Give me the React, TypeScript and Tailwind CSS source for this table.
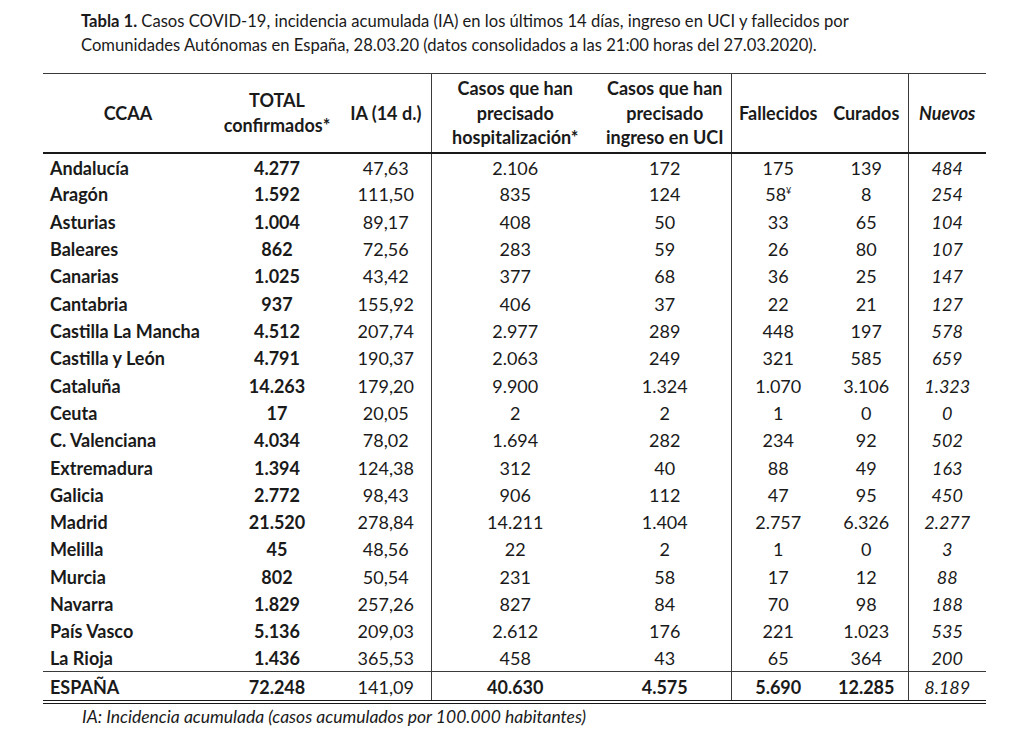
import React from "react";

const rows: string[][] = [
  ["Andalucía", "4.277", "47,63", "2.106", "172", "175", "139", "484"],
  ["Aragón", "1.592", "111,50", "835", "124", "58¥", "8", "254"],
  ["Asturias", "1.004", "89,17", "408", "50", "33", "65", "104"],
  ["Baleares", "862", "72,56", "283", "59", "26", "80", "107"],
  ["Canarias", "1.025", "43,42", "377", "68", "36", "25", "147"],
  ["Cantabria", "937", "155,92", "406", "37", "22", "21", "127"],
  ["Castilla La Mancha", "4.512", "207,74", "2.977", "289", "448", "197", "578"],
  ["Castilla y León", "4.791", "190,37", "2.063", "249", "321", "585", "659"],
  ["Cataluña", "14.263", "179,20", "9.900", "1.324", "1.070", "3.106", "1.323"],
  ["Ceuta", "17", "20,05", "2", "2", "1", "0", "0"],
  ["C. Valenciana", "4.034", "78,02", "1.694", "282", "234", "92", "502"],
  ["Extremadura", "1.394", "124,38", "312", "40", "88", "49", "163"],
  ["Galicia", "2.772", "98,43", "906", "112", "47", "95", "450"],
  ["Madrid", "21.520", "278,84", "14.211", "1.404", "2.757", "6.326", "2.277"],
  ["Melilla", "45", "48,56", "22", "2", "1", "0", "3"],
  ["Murcia", "802", "50,54", "231", "58", "17", "12", "88"],
  ["Navarra", "1.829", "257,26", "827", "84", "70", "98", "188"],
  ["País Vasco", "5.136", "209,03", "2.612", "176", "221", "1.023", "535"],
  ["La Rioja", "1.436", "365,53", "458", "43", "65", "364", "200"],
];

function Val({ v }: { v: string }) {
  if (v.endsWith("¥")) {
    return (
      <span>
        {v.slice(0, -1)}
        <sup className="text-[9px] -top-[7px]">¥</sup>
      </span>
    );
  }
  return <span>{v}</span>;
}

export default function App() {
  return (
    <div
      className="w-[1024px] h-[740px] bg-white text-[#1a1a1a] overflow-hidden"
      style={{ fontFamily: "Lato, 'Open Sans', sans-serif" }}
    >
      <div className="pl-[81px] pt-[9px] text-[16.6px] leading-[24px]">
        <span className="font-bold">Tabla 1.</span> Casos COVID-19, incidencia acumulada (IA) en los últimos 14 días, ingreso en UCI y fallecidos por
        <br />
        Comunidades Autónomas en España, 28.03.20 (datos consolidados a las 21:00 horas del 27.03.2020).
      </div>
      <div className="pl-[43px] mt-[16px]">
        <table className="table-fixed border-collapse w-[943px] text-[18px] leading-[24.5px]">
          <colgroup>
            <col className="w-[170px]" />
            <col className="w-[128px]" />
            <col className="w-[90px]" />
            <col className="w-[168px]" />
            <col className="w-[132px]" />
            <col className="w-[94px]" />
            <col className="w-[83px]" />
            <col className="w-[78px]" />
          </colgroup>
          <thead>
            <tr className="h-[79px] border-t border-b-2 border-t-[#3a3a3a] border-b-[#1a1a1a] font-bold text-center">
              <th className="font-bold">CCAA</th>
              <th className="font-bold">
                TOTAL
                <br />
                confirmados*
              </th>
              <th className="font-bold">IA (14 d.)</th>
              <th className="font-bold border-l border-l-[#3a3a3a]">
                Casos que han
                <br />
                precisado
                <br />
                hospitalización*
              </th>
              <th className="font-bold">
                Casos que han
                <br />
                precisado
                <br />
                ingreso en UCI
              </th>
              <th className="font-bold border-l border-l-[#3a3a3a]">Fallecidos</th>
              <th className="font-bold">Curados</th>
              <th className="font-bold italic border-l border-l-[#3a3a3a]">Nuevos</th>
            </tr>
          </thead>
          <tbody>
            {rows.map((r, i) => (
              <tr
                key={r[0]}
                className={
                  "h-[27.32px] " + (i === rows.length - 1 ? "border-b border-b-[#3a3a3a]" : "")
                }
              >
                <td className="pl-[7px] pt-[2px] font-bold text-left whitespace-nowrap">{r[0]}</td>
                <td className="pt-[2px] text-center font-bold">{r[1]}</td>
                <td className="pt-[2px] text-center">{r[2]}</td>
                <td className="pt-[2px] text-center border-l border-l-[#3a3a3a]">{r[3]}</td>
                <td className="pt-[2px] text-center">{r[4]}</td>
                <td className="pt-[2px] text-center border-l border-l-[#3a3a3a]">
                  <Val v={r[5]} />
                </td>
                <td className="pt-[2px] text-center">{r[6]}</td>
                <td className="pt-[2px] text-center italic border-l border-l-[#3a3a3a]">{r[7]}</td>
              </tr>
            ))}
            <tr className="h-[30px] border-b-4 border-double border-b-[#1a1a1a]">
              <td className="pl-[7px] pt-[3px] font-bold text-left">ESPAÑA</td>
              <td className="pt-[3px] text-center font-bold">72.248</td>
              <td className="pt-[3px] text-center">141,09</td>
              <td className="pt-[3px] text-center font-bold border-l border-l-[#3a3a3a]">40.630</td>
              <td className="pt-[3px] text-center font-bold">4.575</td>
              <td className="pt-[3px] text-center font-bold border-l border-l-[#3a3a3a]">5.690</td>
              <td className="pt-[3px] text-center font-bold">12.285</td>
              <td className="pt-[3px] text-center italic border-l border-l-[#3a3a3a]">8.189</td>
            </tr>
          </tbody>
        </table>
      </div>
      <div className="pl-[82px] pt-[2px] text-[17.5px] leading-[22px] italic">
        IA: Incidencia acumulada (casos acumulados por 100.000 habitantes)
      </div>
    </div>
  );
}
